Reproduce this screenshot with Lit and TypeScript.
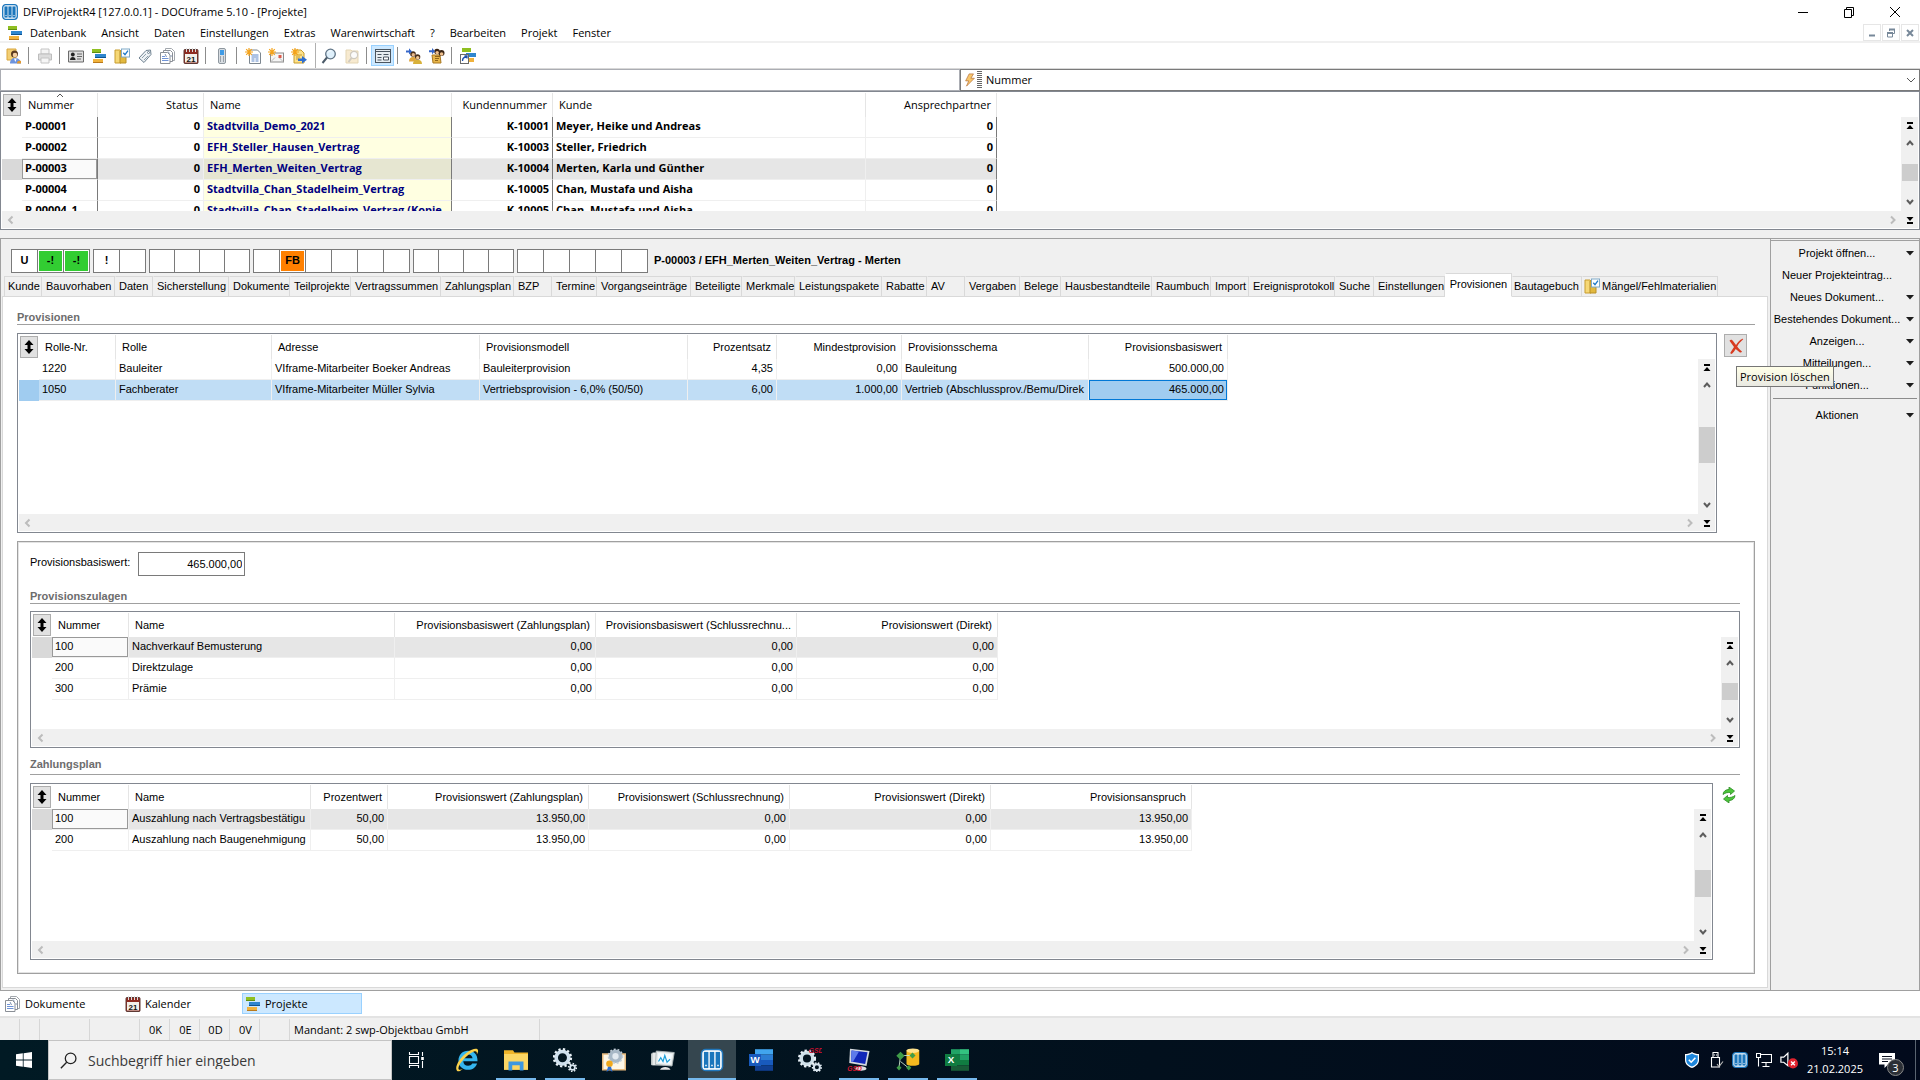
import { LitElement, html, css, svg, nothing, TemplateResult } from "lit";
import { classMap } from "lit/directives/class-map.js";
import { styleMap } from "lit/directives/style-map.js";

/* ---------- icons ---------- */

const pics: Record<string, TemplateResult> = {
  logo: svg`<rect x="0.7" y="0.7" width="14.6" height="14.6" rx="3" fill="#fff" stroke="#1b76bc" stroke-width="1.3"/>
    <rect x="2.4" y="2.4" width="3.2" height="11.2" fill="#1b76bc"/><rect x="6.4" y="2.4" width="3.2" height="11.2" fill="#1b76bc"/><rect x="10.4" y="2.4" width="3.2" height="11.2" fill="#1b76bc"/>
    <path d="M3.5 11.5h1M7.5 11.5h1M11.5 11.5h1" stroke="#fff"/>`,
  projekte: svg`<rect x="1" y="1" width="9" height="4" fill="#8fbf21"/><path d="M1 4.5h9" stroke="#5f8f10"/>
    <rect x="4" y="6" width="11" height="4" fill="#2f86cf"/><path d="M4 9.5h11" stroke="#0e5591"/>
    <rect x="2" y="11" width="10" height="4" fill="#f0b23c"/><path d="M2 14.500h10" stroke="#b9791c"/>`,
  user: svg`<path d="M1 1h9v11H1z" fill="#f3cf74" stroke="#d9a63c"/><circle cx="8.500" cy="6" r="3.500" fill="#5a3a20"/><circle cx="9" cy="7" r="2.300" fill="#f4cfa2"/><path d="M4 15.500c0-3.500 2-5.500 5-5.500s6 2 6 5.500z" fill="#6d93dd"/><path d="M8 10.500l1.300 3.500 1.500-3.500z" fill="#fff"/><path d="M11 15.500c0-2 1-3 4-2.500v2.500z" fill="#e39a2e"/>`,
  printer: svg`<path d="M4 1h8v5H4z" fill="#f4f4f4" stroke="#c4c4c4"/><path d="M1.500 6h13v6h-13z" fill="#dcdcdc" stroke="#bdbdbd"/><path d="M4 10h8v5H4z" fill="#f6f6f6" stroke="#c4c4c4"/>`,
  card: svg`<path d="M.5 3h15v11H.5z" fill="#dedede" stroke="#6b6b6b"/><circle cx="4.800" cy="6.500" r="1.900" fill="#222"/><path d="M2 12c0-4 5.600-4 5.600 0z" fill="#222"/><path d="M9 6h5M9 8.500h5M9 11h4" stroke="#666"/>`,
  folder: svg`<path d="M1 2h5l1 1v12H1z" fill="#f6d876" stroke="#c79c2e"/><path d="M6 3h6v12H6z" fill="#e2b93f" stroke="#b98f28"/><rect x="7.500" y="1" width="8" height="8" fill="#fff" stroke="#7fa9c8"/><path d="M9.300 4.800l1.700 1.900 3-4" fill="none" stroke="#1c78c8" stroke-width="1.300"/>`,
  tag: svg`<path d="M2 10L9 2.500l4.500-.5.500 4.500L7 14.500z" fill="#eef2f5" stroke="#6f8291"/><circle cx="11.500" cy="4.500" r="1" fill="#fff" stroke="#6f8291"/><path d="M5 10l4-4M7 12l4-4" stroke="#90a0ac"/>`,
  docs: svg`<path d="M5.500 .5h6l3 3v9h-9z" fill="#fff" stroke="#a2a7ad"/><path d="M3.500 2.500h7l2 2v9h-9z" fill="#fff" stroke="#8a8f96"/><path d="M.5 4.500h7l2.500 2.500v8.500H.5z" fill="#fff" stroke="#8a8f96"/><path d="M2 8.500h3M2 10.500h6.500M2 12.500h6.500" stroke="#6f93d6"/><path d="M5 6l1.500 3M8 3.500l1.500 2M10.500 8h1.500" stroke="#7d8fb0"/>`,
  calendar: svg`<rect x="1" y="1.500" width="14" height="14" rx="1" fill="#8f2a20" stroke="#5e3a35"/><rect x="2" y="6" width="12" height="8.500" fill="#f3efe9"/><path d="M3.500 0v4M6.500 0v4M9.500 0v4M12.500 0v4" stroke="#ddd"/><text x="8" y="13.500" text-anchor="middle" font-size="8" font-weight="700" font-family="Liberation Sans, sans-serif" fill="#111">21</text>`,
  phone: svg`<rect x="4.500" y="0.500" width="7" height="15" rx="1.500" fill="#d8dde2" stroke="#8e979f"/><rect x="6" y="2" width="4" height="5" fill="#3f9be6"/><path d="M6 9h1M9 9h1M6 11h1M9 11h1M6 13h1M9 13h1" stroke="#5c6770"/>`,
  newdoc: svg`<path d="M4.500 2h8l3 3v10.500h-11z" fill="#fff" stroke="#7d8790"/><path d="M6.500 7h7M6.500 9h7M6.500 11h3M10.500 11h3M6.500 13h3M10.500 13h3" stroke="#5d86c8"/><path d="M4 0v8M0 4h8M1.200 1.200l5.600 5.600M6.800 1.200L1.200 6.800" stroke="#f5a31a" stroke-width="1.200"/>`,
  newmail: svg`<rect x="2.500" y="5" width="13" height="9" fill="#f5f5f5" stroke="#8b8b8b"/><path d="M3 13.500l4-4M11 9.500l4 4" stroke="#bbb"/><rect x="10.500" y="7" width="3" height="3" fill="#dd5a4a"/><path d="M4 0v8M0 4h8M1.200 1.200l5.600 5.600M6.800 1.200L1.200 6.800" stroke="#f5a31a" stroke-width="1.200"/>`,
  newmove: svg`<path d="M3 2h7l3 3v10H3z" fill="#fde18a" stroke="#c79c2e"/><path d="M5 7h6M5 9h4M5 11h3" stroke="#c79c2e"/><path d="M7 10.500h4V8l5 3.800-5 3.800v-2.600H7z" fill="#2f6fd0"/><path d="M4 0v8M0 4h8M1.200 1.200l5.600 5.600M6.800 1.200L1.200 6.800" stroke="#f5a31a" stroke-width="1.200"/>`,
  lens: svg`<circle cx="9.500" cy="6" r="4.800" fill="#dff0fb" stroke="#5f7385" stroke-width="1.300"/><path d="M7 4.500c.8-1.300 2-1.700 3.300-1.500" fill="none" stroke="#fff"/><path d="M6 9.500l-4.500 5.500" stroke="#4b5a68" stroke-width="2"/>`,
  lensoff: svg`<path d="M2 2h5l1 1h6v12H2z" fill="#f7ead0" stroke="#e3d5b4"/><circle cx="10" cy="7" r="3.600" fill="#fbfbfb" stroke="#cfcac0" stroke-width="1.200"/><path d="M7.500 10l-3 4" stroke="#cfcac0" stroke-width="1.800"/>`,
  form: svg`<rect x="0.500" y="1.500" width="15" height="13" fill="#e8eef2" stroke="#4a5560"/><path d="M1 3.500h14" stroke="#4a5560"/><path d="M2.500 6.500h4M2.500 9.500h4M2.500 12h4" stroke="#4a5560"/><path d="M8.500 6.500h5M8.500 9h5v3h-5z" fill="#fff" stroke="#4a5560"/>`,
  people: svg`<circle cx="7" cy="6" r="2.800" fill="#4a2f1c"/><circle cx="7.300" cy="6.800" r="1.700" fill="#e9b98a"/><circle cx="11.500" cy="9" r="2.800" fill="#4a2f1c"/><circle cx="11.700" cy="9.800" r="1.700" fill="#f1c795"/><path d="M3 13.500c0-3 1.500-4.500 4-4.500s3 1 3 4.500z" fill="#e0a63d"/><path d="M7 16c0-3 1.700-4.300 4.500-4.300S16 13 16 16z" fill="#d8b13a"/><path d="M0 2.500h3V.3L6 3.500 3 6.500v-2H0z" fill="#3566c9"/>`,
  team: svg`<path d="M3 7h8l1 8H4z" fill="#e7b54a" stroke="#a97820"/><circle cx="8" cy="3.500" r="2.800" fill="#3b2515"/><circle cx="12.500" cy="5" r="3" fill="#3b2515"/><circle cx="12.600" cy="6" r="1.800" fill="#efc08e"/><circle cx="8.200" cy="4.600" r="1.700" fill="#efc08e"/><path d="M6 8.500h5M6 10.500h4M6 12.500h3" stroke="#8f651b"/><path d="M0 2.200h3V0l3 3.200-3 3V4.200H0z" fill="#3566c9"/>`,
  jump: svg`<rect x="2" y="0" width="9" height="4" fill="#8fbf21"/><rect x="6" y="5" width="10" height="4" fill="#2f86cf"/><rect x="8" y="10" width="6" height="4" fill="#f0b23c"/><rect x="0.500" y="6.500" width="8" height="9" fill="#fff" stroke="#6a6a6a"/><path d="M2.500 13c0-3 1.500-4 4-4M4.500 7.800h2.500v2.700" fill="none" stroke="#1e4fae" stroke-width="1.300"/>`,
  bolt: svg`<path d="M7 1h5L9 6h4L4 15l2.500-6H3z" fill="#f8c66b" stroke="#b5713a" stroke-width=".8"/>`,
  cross: svg`<path d="M1.500 2.800C2.500 1 4 1.500 5 3l3 4c1.800-2.800 3.800-5 6.500-6.200.6 0 .9.300.4.800C12.500 3.800 10.600 6 9.200 8.600c1.200 1.800 2.700 3.400 4.800 5-.5 1.200-1.600 1.300-2.700.5L7.700 11C6.500 13 5.300 14.600 4 15.800c-1.300.4-2-.4-1.500-1.300C3.600 12.700 4.800 10.800 6 9z" fill="#d83a20"/>`,
  refresh: svg`<path d="M2 7.500C2.300 4 5 2.500 8 2.500V0L13.500 4 9.500 7.500V5.500C6.500 5.200 4 6 2 7.500z" fill="#4cc63a" stroke="#2c8a25" stroke-width=".8"/><path d="M14 8.500c-.3 3.500-3 5-6 5V16L2.500 12 6.500 8.500v2c3 .3 5.500-.5 7.500-2z" fill="#4cc63a" stroke="#2c8a25" stroke-width=".8"/>`,
  sort: svg`<path d="M8 1l4.500 5h-3v4h3L8 15l-4.500-5h3V6h-3z" fill="#000"/>`,
  up: svg`<path d="M5 10l3-3.500 3 3.500" fill="none" stroke="#5c5c5c" stroke-width="2"/>`,
  down: svg`<path d="M5 5l3 3.500L11 5" fill="none" stroke="#5c5c5c" stroke-width="2"/>`,
  left: svg`<path d="M9.500 4.500L6 8l3.500 3.500" fill="none" stroke="#bcbcbc" stroke-width="2"/>`,
  right: svg`<path d="M6 4.500L9.500 8 6 11.500" fill="none" stroke="#bcbcbc" stroke-width="2"/>`,
  first: svg`<path d="M5 4h6v2H5zM8 7l3.500 4h-7z" fill="#000"/>`,
  last: svg`<path d="M5 10h6v2H5zM8 9L4.500 5h7z" fill="#000"/>`,
  caret: svg`<path d="M4 6h8l-4 4.500z" fill="#1c1c1c"/>`,
  chevron: svg`<path d="M4 6l4 4 4-4" fill="none" stroke="#555"/>`,
  asc: svg`<path d="M5 10l3-3 3 3" fill="none" stroke="#555"/>`,
  min: svg`<path d="M3 8.500h10" stroke="#000"/>`,
  restore: svg`<path d="M3.500 5.500h7v8h-7zM5.500 5V3.500h7v8H11" fill="none" stroke="#000"/>`,
  close: svg`<path d="M3 3l10 10M13 3L3 13" stroke="#000"/>`,
  mdimin: svg`<path d="M5 10.500h6" stroke="#778899" stroke-width="2"/>`,
  mdirestore: svg`<path d="M4.500 8h5v4h-5zM6.500 6V4.500h5v4H10" fill="none" stroke="#778899"/><path d="M4 8h6M6 4.500h6" stroke="#778899" stroke-width="2"/>`,
  mdiclose: svg`<path d="M5 5l6 6M11 5l-6 6" stroke="#778899" stroke-width="2"/>`,
  windows: svg`<path d="M0 2.300L6.800 1.300V7.600H0zM7.600 1.200L16 0v7.600H7.600zM0 8.400h6.800v6.300L0 13.700zM7.600 8.400H16V16l-8.400-1.200z" fill="#fff"/>`,
  search: svg`<circle cx="10" cy="6" r="5" fill="none" stroke="#222" stroke-width="1.200"/><path d="M6.300 9.700L.8 15.300" stroke="#222" stroke-width="1.300"/>`,
  taskview: svg`<path d="M1.500 4.500h9v7h-9zM1.500 0v2.500h9V0M1.500 16v-2.500h9V16M14.500 0v4M14.500 9v7" fill="none" stroke="#fff" stroke-width="1.100"/><rect x="13.200" y="5" width="2.600" height="3" fill="#fff"/>`,
  ie: svg`<path d="M15 8.800H5.500c.2 2 1.400 3 3.200 3 1.300 0 2.200-.5 2.800-1.500h3.200C13.800 13 11.700 14.500 8.700 14.500 5 14.500 2.300 12 2.300 8.300S5 1.800 8.700 1.800c4 0 6.500 2.600 6.300 7zM5.600 6.900h6.100C11.500 5.200 10.400 4.300 8.700 4.300S5.800 5.200 5.600 6.900z" fill="#35b5ee"/><path d="M1.300 15.200C-.6 13 3 6.500 8 3c3.500-2.500 6.800-3.200 7.300-1.600.3.900-.2 2-.8 3.100.4-2-.4-2.700-2.200-2C8 4.200 2.500 10.500 2.300 13.300c-.1 1.500 1.300 1.400 3 .5-1.700 1.600-3.200 2.200-4 1.400z" fill="#fbd14b"/>`,
  explorer: svg`<path d="M0 1.500h6l1 1.500h9v11.500H0z" fill="#f0b429"/><path d="M0 4h16v10.500H0z" fill="#fcd664"/><path d="M3 9h10v6H10.500v-3.500h-5V15H3z" fill="#3e97df"/>`,
  gears: svg`<circle cx="6.300" cy="6.500" r="4.200" fill="none" stroke="#cfe0ee" stroke-width="2.400"/><circle cx="6.300" cy="6.500" r="5.700" fill="none" stroke="#e9f1f7" stroke-width="1.500" stroke-dasharray="1.500 1.500"/><circle cx="13" cy="13" r="1.600" fill="none" stroke="#d6e4ef" stroke-width="1.200"/><circle cx="13" cy="13" r="2.600" fill="none" stroke="#e9f1f7" stroke-width="1" stroke-dasharray="1 1"/>`,
  cert: svg`<rect x="0.500" y="4" width="15" height="10.500" fill="#fdf6e6" stroke="#e5b87c"/><circle cx="9" cy="5.500" r="3.300" fill="#e3eaf0" stroke="#a8b8c6" stroke-width="2.400"/><circle cx="9" cy="5.500" r="4.700" fill="none" stroke="#c3ced8" stroke-dasharray="1.300 1.300"/><circle cx="5" cy="10.500" r="2.200" fill="#f0a81c"/><path d="M4 12.500l-1 3.500 2-1.500 2 1.500-1-3.500z" fill="#2d6fd2"/>`,
  monitor: svg`<rect x="0" y="3.500" width="9" height="8" rx=".5" fill="#b9c0c0"/><rect x="1" y="3" width="9" height="8.500" fill="#e6e9e9"/><path d="M3.500 2l12 1-1.500 9L3 11z" fill="#e8ecec" stroke="#a9b3b5" stroke-width=".6"/><path d="M4.800 3.300l9.200.8-1.100 6.500-8.400-.8z" fill="#f6fcff"/><path d="M5 9l1.500-2.500L8 9l1.200-4 1.500 4.500 2-2" fill="none" stroke="#1c9fd8" stroke-width=".8"/><path d="M6 14.500c1-2.500 6-2.500 7 0z" fill="#e6e6e6"/>`,
  tasklogo: svg`<rect x="0.500" y="0.500" width="15" height="15" rx="3.200" fill="#2277bb"/><rect x="1.500" y="1.500" width="13" height="13" rx="2.400" fill="#fff"/><rect x="2.600" y="2.600" width="3" height="10.800" fill="#1b76bc"/><rect x="6.500" y="2.600" width="3" height="10.800" fill="#1b76bc"/><rect x="10.400" y="2.600" width="3" height="10.800" fill="#1b76bc"/><path d="M3.500 11.700h1M7.500 11.700h1M11.500 11.700h1" stroke="#fff"/>`,
  word: svg`<rect x="4" y="0.800" width="12" height="3.600" fill="#41a5ee"/><rect x="4" y="4.400" width="12" height="3.600" fill="#2b7cd3"/><rect x="4" y="8" width="12" height="3.600" fill="#185abd"/><rect x="4" y="11.600" width="12" height="3.600" fill="#103f91"/><rect x="0" y="4" width="8" height="8" fill="#185abd"/><text x="4" y="10.200" text-anchor="middle" font-size="6.500" font-weight="700" font-family="Liberation Sans, sans-serif" fill="#fff">W</text>`,
  excel: svg`<rect x="4" y="0.800" width="6" height="3.600" fill="#21a366"/><rect x="10" y="0.800" width="6" height="3.600" fill="#33c481"/><rect x="4" y="4.400" width="6" height="3.600" fill="#107c41"/><rect x="10" y="4.400" width="6" height="3.600" fill="#21a366"/><rect x="4" y="8" width="12" height="3.600" fill="#107c41"/><rect x="4" y="11.600" width="12" height="3.600" fill="#185c37"/><rect x="0" y="4" width="8" height="8" fill="#107c41"/><text x="4" y="10.200" text-anchor="middle" font-size="6.500" font-weight="700" font-family="Liberation Sans, sans-serif" fill="#fff">X</text>`,
  gsdgears: svg`<circle cx="6" cy="7" r="3.900" fill="none" stroke="#cfe0ea" stroke-width="2.400"/><circle cx="6" cy="7" r="5.300" fill="none" stroke="#e9f1f7" stroke-width="1.500" stroke-dasharray="1.500 1.400"/><circle cx="12.600" cy="12.800" r="2" fill="none" stroke="#d6e4ef" stroke-width="1.300"/><circle cx="12.600" cy="12.800" r="2.900" fill="none" stroke="#e9f1f7" stroke-dasharray="1 1"/><text x="12" y="3.600" text-anchor="middle" font-size="4.500" font-style="italic" font-weight="700" font-family="Liberation Sans, sans-serif" fill="#c8102e">GSD</text>`,
  gsdpc: svg`<path d="M2 .5l13 1.500-2 10L1.500 10z" fill="#d5dadf"/><path d="M3 1.700l10.700 1.200-1.600 7.700L2.700 9z" fill="#1127b8"/><path d="M3 1.700l5 .6-4 6.900-1.300-.2z" fill="#5e7bea"/><path d="M5 14c1-2.500 8-2.500 8 0-1 1.500-6 1.500-8 0z" fill="#dfdfdf"/><text x="5" y="15.600" text-anchor="middle" font-size="4.500" font-style="italic" font-weight="700" font-family="Liberation Sans, sans-serif" fill="#d8142f">GSD</text>`,
  database: svg`<path d="M7 1.500v9c0 1.800 8.500 1.800 8.500 0v-9z" fill="#f3b81f"/><ellipse cx="11.250" cy="1.800" rx="4.250" ry="1.500" fill="#ffe28a"/><path d="M3 5l8 0M3 5l-1 8M3 9l5 4" stroke="#c9e2c9" stroke-width=".6"/><path d="M3 2.500l2.800 2.700L3 8 .2 5.200zM11 3l2 2-2 2-2-2zM2 11.500l1.700 1.700L2 15 .3 13.200zM8.500 11.500l1.700 1.700L8.500 15l-1.700-1.800z" fill="#3f9c48"/>`,
  shield: svg`<path d="M8 0c2 1.500 4.500 2 7 2v6c0 4-3 6.500-7 8-4-1.500-7-4-7-8V2c2.500 0 5-.5 7-2z" fill="#fff"/><path d="M8 1.400c1.800 1.200 3.700 1.700 5.800 1.800V8c0 3.300-2.400 5.300-5.800 6.600C4.600 13.300 2.200 11.300 2.200 8V3.200C4.300 3.100 6.200 2.600 8 1.400z" fill="#1d86dc"/><path d="M4.800 7.800l2.400 2.400 4.200-4.400" fill="none" stroke="#fff" stroke-width="1.600"/>`,
  usb: svg`<path d="M3.500 5.500h8v9.500h-8zM5 5.500v-5h5v5M6.500 2.500v1M8.500 2.500v1" fill="none" stroke="#fff" stroke-width="1.100"/><path d="M9 12l2 2.500 4-5" fill="none" stroke="#b5b5b5" stroke-width="1.200"/>`,
  net: svg`<path d="M4.500 2.500h11v8h-10M10 10.500v3.500M6.500 14.500h7M.5 1.500h4v4h-4zM2.500 5.500v9" fill="none" stroke="#fff" stroke-width="1.100"/>`,
  mute: svg`<path d="M.8 5.500h2.500L7 2v11L3.300 10H.8z" fill="none" stroke="#fff" stroke-width="1.100"/><circle cx="11.500" cy="11" r="4.500" fill="#e0232e"/><path d="M9.800 9.300l3.400 3.400M13.200 9.300l-3.400 3.400" stroke="#fff" stroke-width="1.200"/>`,
  note: svg`<path d="M0 1h16v11.500h-7L5.500 16v-3.500H0z" fill="#fff"/><path d="M3 4.500h10M3 7h10M3 9.500h6" stroke="#0a1020" stroke-width="1.100"/>`,
};

const icon = (name: string, size = 16) =>
  html`<svg width=${size} height=${size} viewBox="0 0 16 16" aria-hidden="true">${pics[name]}</svg>`;

/* ---------- list control ---------- */

interface Column {
  label: string;
  width: number;
  right?: boolean;
  rule?: boolean;
  tint?: boolean;
  sorted?: boolean;
}

class DfGrid extends LitElement {
  static properties = {
    columns: { attribute: false },
    rows: { attribute: false },
    selected: { type: Number },
    focusColumn: { type: Number },
    caption: {},
  };
  declare columns: Column[];
  declare rows: string[][];
  declare selected: number;
  declare focusColumn: number;
  declare caption: string;

  static styles = css`
    :host {
      display: flex;
      flex-direction: column;
      box-sizing: border-box;
      min-width: 0;
      border: 1px solid #828790;
      padding: 1px;
      background: #fff;
      font: 11px/18px "Liberation Sans", Arial, sans-serif;
      color: #000;
    }
    :host(.master) {
      font: 11px/18px "Open Sans", "Noto Sans", sans-serif;
    }
    :host(.master) td {
      font-weight: 700;
    }
    svg {
      display: block;
      flex: none;
    }
    button {
      display: flex;
      align-items: center;
      justify-content: center;
      border: 0;
      margin: 0;
      padding: 0;
      background: none;
    }
    .top {
      display: flex;
      flex: 1;
      min-height: 0;
    }
    .view {
      flex: 1 1 0;
      min-width: 0;
      overflow: hidden;
      contain: size;
    }
    table {
      table-layout: fixed;
      border-collapse: separate;
      border-spacing: 0;
    }
    th,
    td {
      box-sizing: border-box;
      padding: 0 3px;
      overflow: hidden;
      white-space: nowrap;
      text-align: left;
      font-weight: 400;
    }
    th {
      position: relative;
      height: 24px;
      padding: 0 5px 0 6px;
      border-right: 1px solid #e5e5e5;
    }
    td {
      height: 21px;
      padding-bottom: 2px;
      border-right: 1px solid #efefef;
      border-bottom: 1px solid #efefef;
    }
    .right {
      text-align: right;
    }
    .gutter,
    td.gutter {
      border: 0;
      padding: 0 1px;
    }
    .sorter {
      width: 18px;
      height: 22px;
      border: 1px solid #adadad;
      background: #e1e1e1;
    }
    .asc {
      position: absolute;
      left: 30px;
      top: -6px;
    }
    td.rule {
      border-right-color: #7a7a7a;
    }
    td.tint {
      background: #ffffe1;
      color: #000080;
    }
    .selected td {
      background: #e6e6e6;
    }
    .selected td.tint {
      background: #e6e6d1;
    }
    .selected td.gutter {
      background: #d9d9d9;
    }
    .selected td.focus {
      background: #fafafa;
      box-shadow: inset 0 0 0 1px #999;
    }
    :host(.active) .selected td {
      background: #c0ddf5;
    }
    :host(.active) .selected td.gutter {
      background: #a0ccf0;
    }
    :host(.active) .selected td.focus {
      background: #a0ccf0;
      box-shadow: inset 0 0 0 1px #0078d7;
    }
    .vbar {
      display: flex;
      flex-direction: column;
      width: 17px;
      margin-top: 24px;
      background: #f0f0f0;
    }
    .vbar button {
      height: 17px;
    }
    .track {
      display: flex;
      flex: 1;
      align-items: center;
      padding-left: 1px;
    }
    .thumb {
      width: 100%;
      height: 34%;
      min-height: 17px;
      background: #cdcdcd;
    }
    .hbar {
      display: flex;
      align-items: center;
      justify-content: space-between;
      height: 17px;
      background: #f0f0f0;
    }
    .hbar button {
      width: 17px;
    }
    .ends {
      display: flex;
    }
  `;

  render() {
    const total = this.columns.reduce((sum, c) => sum + c.width, 20);
    return html`
      <div class="top">
        <div class="view">
          <table style=${styleMap({ width: `${total}px` })} aria-label=${this.caption}>
            <colgroup>
              <col style="width:20px" />
              ${this.columns.map((c) => html`<col style=${styleMap({ width: `${c.width}px` })} />`)}
            </colgroup>
            <thead>
              <tr>
                <th class="gutter"><button class="sorter" aria-label="Sortierung">${icon("sort", 16)}</button></th>
                ${this.columns.map(
                  (c) => html`<th class=${classMap({ right: !!c.right })} scope="col">
                    ${c.sorted ? html`<span class="asc">${icon("asc")}</span>` : nothing}${c.label}
                  </th>`
                )}
              </tr>
            </thead>
            <tbody>
              ${this.rows.map(
                (r, i) => html`<tr class=${classMap({ selected: i === this.selected })}>
                  <td class="gutter"></td>
                  ${r.map((v, j) => {
                    const c = this.columns[j];
                    return html`<td
                      class=${classMap({
                        right: !!c.right,
                        rule: !!c.rule,
                        tint: !!c.tint,
                        focus: j === this.focusColumn,
                      })}
                    >${v}</td>`;
                  })}
                </tr>`
              )}
            </tbody>
          </table>
        </div>
        <div class="vbar">
          <button aria-label="Anfang">${icon("first")}</button>
          <button aria-label="Nach oben">${icon("up")}</button>
          <div class="track"><div class="thumb"></div></div>
          <button aria-label="Nach unten">${icon("down")}</button>
        </div>
      </div>
      <div class="hbar">
        <button aria-label="Nach links">${icon("left")}</button>
        <div class="ends">
          <button aria-label="Nach rechts">${icon("right")}</button>
          <button aria-label="Ende">${icon("last")}</button>
        </div>
      </div>
    `;
  }
}
customElements.define("df-grid", DfGrid);

/* ---------- data ---------- */

const projectColumns: Column[] = [
  { label: "Nummer", width: 76, rule: true, sorted: true },
  { label: "Status", width: 106, right: true },
  { label: "Name", width: 248, rule: true, tint: true },
  { label: "Kundennummer", width: 101, right: true, rule: true },
  { label: "Kunde", width: 313 },
  { label: "Ansprechpartner", width: 131, right: true, rule: true },
];
const projects = [
  ["P-00001", "0", "Stadtvilla_Demo_2021", "K-10001", "Meyer, Heike und Andreas", "0"],
  ["P-00002", "0", "EFH_Steller_Hausen_Vertrag", "K-10003", "Steller, Friedrich", "0"],
  ["P-00003", "0", "EFH_Merten_Weiten_Vertrag", "K-10004", "Merten, Karla und Günther", "0"],
  ["P-00004", "0", "Stadtvilla_Chan_Stadelheim_Vertrag", "K-10005", "Chan, Mustafa und Aisha", "0"],
  ["P-00004_1", "0", "Stadtvilla_Chan_Stadelheim_Vertrag (Kopie", "K-10005", "Chan, Mustafa und Aisha", "0"],
];
const commissionColumns: Column[] = [
  { label: "Rolle-Nr.", width: 77 },
  { label: "Rolle", width: 156 },
  { label: "Adresse", width: 208 },
  { label: "Provisionsmodell", width: 208 },
  { label: "Prozentsatz", width: 89, right: true },
  { label: "Mindestprovision", width: 125, right: true },
  { label: "Provisionsschema", width: 187 },
  { label: "Provisionsbasiswert", width: 139, right: true },
];
const commissions = [
  ["1220", "Bauleiter", "VIframe-Mitarbeiter Boeker Andreas", "Bauleiterprovision", "4,35", "0,00", "Bauleitung", "500.000,00"],
  ["1050", "Fachberater", "VIframe-Mitarbeiter Müller Sylvia", "Vertriebsprovision - 6,0% (50/50)", "6,00", "1.000,00", "Vertrieb (Abschlussprov./Bemu/Direk", "465.000,00"],
];
const bonusColumns: Column[] = [
  { label: "Nummer", width: 77 },
  { label: "Name", width: 266 },
  { label: "Provisionsbasiswert (Zahlungsplan)", width: 201, right: true },
  { label: "Provisionsbasiswert (Schlussrechnu...", width: 201, right: true },
  { label: "Provisionswert (Direkt)", width: 201, right: true },
];
const bonuses = [
  ["100", "Nachverkauf Bemusterung", "0,00", "0,00", "0,00"],
  ["200", "Direktzulage", "0,00", "0,00", "0,00"],
  ["300", "Prämie", "0,00", "0,00", "0,00"],
];
const planColumns: Column[] = [
  { label: "Nummer", width: 77 },
  { label: "Name", width: 182 },
  { label: "Prozentwert", width: 77, right: true },
  { label: "Provisionswert (Zahlungsplan)", width: 201, right: true },
  { label: "Provisionswert (Schlussrechnung)", width: 201, right: true },
  { label: "Provisionswert (Direkt)", width: 201, right: true },
  { label: "Provisionsanspruch", width: 201, right: true },
];
const plan = [
  ["100", "Auszahlung nach Vertragsbestätigu", "50,00", "13.950,00", "0,00", "0,00", "13.950,00"],
  ["200", "Auszahlung nach Baugenehmigung", "50,00", "13.950,00", "0,00", "0,00", "13.950,00"],
];

const menus = ["Datenbank", "Ansicht", "Daten", "Einstellungen", "Extras", "Warenwirtschaft", "?", "Bearbeiten", "Projekt", "Fenster"];
const tools: [string, string][] = [
  ["user", "Anmelden"], ["|", ""], ["printer", "Drucken"], ["|", ""],
  ["card", "Adressen"], ["projekte", "Projekte"], ["folder", "Vorgänge"], ["tag", "Artikel"], ["docs", "Dokumente"], ["calendar", "Kalender"],
  ["|", ""], ["phone", "Telefon"], ["|", ""],
  ["newdoc", "Neues Dokument"], ["newmail", "Neue Nachricht"], ["newmove", "Weiterleiten"],
  ["||", ""], ["lens", "Suchen"], ["lensoff", "Suche in Liste"], ["|", ""],
  ["form", "Formular"], ["|", ""], ["people", "Kontakte"], ["team", "Beteiligte"], ["|", ""], ["jump", "Verknüpfung"],
];
const flagGroups: string[][] = [
  ["U", "-!", "-!"], ["!", ""], ["", "", "", ""], ["", "FB", "", "", "", ""], ["", "", "", ""], ["", "", "", "", ""],
];
const tabs = [
  "Kunde", "Bauvorhaben", "Daten", "Sicherstellung", "Dokumente", "Teilprojekte", "Vertragssummen", "Zahlungsplan", "BZP",
  "Termine", "Vorgangseinträge", "Beteiligte", "Merkmale", "Leistungspakete", "Rabatte", "AV", "Vergaben", "Belege",
  "Hausbestandteile", "Raumbuch", "Import", "Ereignisprotokoll", "Suche", "Einstellungen", "Provisionen", "Bautagebuch",
  "Mängel/Fehlmaterialien",
];
const actions: [string, boolean][] = [
  ["Projekt öffnen...", true], ["Neuer Projekteintrag...", false], ["Neues Dokument...", true],
  ["Bestehendes Dokument...", true], ["Anzeigen...", true], ["Mitteilungen...", true], ["Funktionen...", true],
];
const apps: [string, string, string][] = [
  ["ie", "Internet Explorer", ""], ["explorer", "Explorer", "open"], ["gears", "Dienste", "open"], ["cert", "Zertifikate", ""],
  ["monitor", "Leistung", ""], ["tasklogo", "DOCUframe", "current"], ["word", "Word", ""], ["gsdgears", "GSD Dienste", ""],
  ["gsdpc", "GSD Client", "open"], ["database", "Datenbank", "open"], ["excel", "Excel", "open"],
];

/* ---------- application ---------- */

class AppRoot extends LitElement {
  static styles = css`
    :host {
      --ui: "Open Sans", "Noto Sans", sans-serif;
      --form: "Liberation Sans", Arial, sans-serif;
      display: flex;
      flex-direction: column;
      min-height: 100vh;
      background: #f0f0f0;
      color: #000;
      font: 11px/16px var(--ui);
    }
    * {
      box-sizing: border-box;
    }
    svg {
      display: block;
      flex: none;
    }
    button,
    input,
    select {
      font: inherit;
      color: inherit;
      margin: 0;
      padding: 0;
      border: 0;
      border-radius: 0;
      background: none;
      outline: 0;
      appearance: none;
    }
    button {
      display: flex;
      align-items: center;
      justify-content: center;
      white-space: nowrap;
    }
    .titlebar,
    .menubar,
    .toolbar {
      display: flex;
      align-items: center;
      background: #fff;
    }
    .titlebar {
      height: 24px;
      padding-left: 2px;
      gap: 5px;
    }
    .titlebar h1 {
      flex: 1;
      margin: 0;
      font: inherit;
    }
    .wincontrols {
      display: flex;
      padding-right: 2px;
    }
    .wincontrols button {
      width: 46px;
      height: 20px;
    }
    .menubar {
      height: 19px;
      border-bottom: 2px solid #f0f0f0;
      padding-left: 7px;
    }
    .menubar nav {
      display: flex;
      flex: 1;
      gap: 15px;
      padding-left: 7px;
    }
    .mdi {
      display: flex;
      gap: 1px;
      padding-right: 1px;
    }
    .mdi button {
      width: 18px;
      height: 17px;
      border: 1px solid #e6e6e6;
    }
    .toolbar {
      height: 26px;
      padding-left: 2px;
      border-bottom: 1px solid #d8d8d8;
    }
    .tool {
      width: 23px;
      height: 21px;
    }
    .tool.on {
      background: #cce8ff;
      border: 1px solid #99d1ff;
    }
    .sep {
      width: 1px;
      height: 17px;
      margin: 0 4px 0 3px;
      background: #8c8c8c;
    }
    .sep.full {
      height: 25px;
      margin: 0 1px 0 5px;
      background: #b0b0b0;
    }
    .searchrow {
      display: grid;
      grid-template-columns: 1fr 1fr;
      height: 22px;
    }
    .searchrow input {
      min-width: 0;
      background: #fff;
      border: 1px solid #abadb3;
    }
    .combo {
      display: flex;
      align-items: center;
      border: 1px solid #7a7a7a;
      background: #fff;
      padding: 0 0 0 2px;
    }
    .combo select {
      flex: 1;
      padding-left: 4px;
      height: 18px;
      line-height: 16px;
    }
    .stripes {
      width: 5px;
      height: 18px;
      background: repeating-linear-gradient(#666 0 1px, #fff 1px 2px);
    }
    .master {
      height: 139px;
    }
    .workspace {
      display: flex;
      flex: 1;
      margin-top: 8px;
      border: 1px solid #a0a0a0;
      font: 11px/16px var(--form);
    }
    .record {
      display: flex;
      flex-direction: column;
      flex: 1;
      min-width: 0;
      padding: 10px 2px 2px 1px;
      border-right: 1px solid #a0a0a0;
    }
    .flags {
      display: flex;
      align-items: center;
      gap: 3px;
      padding-left: 9px;
    }
    .flaggroup {
      display: flex;
      padding-right: 1px;
    }
    .flag {
      width: 27px;
      height: 24px;
      margin-right: -1px;
      padding-bottom: 2px;
      border: 1px solid #7a7a7a;
      background: #fff;
      font-weight: 700;
    }
    .flaggroup.four .flag {
      width: 26px;
    }
    .flag.green {
      background: #32cd32;
      box-shadow: inset 0 0 0 1px #fff;
    }
    .flag.orange {
      background: #ff8000;
      box-shadow: inset 0 0 0 1px #fff;
    }
    .flags h2 {
      margin: 0 0 0 3px;
      padding-bottom: 2px;
      font: inherit;
      font-weight: 700;
    }
    .tabs {
      display: grid;
      grid-template-columns: 38px 73px 38px 76px 61px 61px 90px 73px 38px 45px 94px 51px 53px 87px 45px 38px 55px 41px 91px 59px 38px 86px 39px 71px 67px 70px 136px;
      align-items: end;
      height: 24px;
      padding-left: 2px;
      margin-bottom: -1px;
    }
    .tab {
      height: 21px;
      border: 1px solid #d9d9d9;
      border-left-color: transparent;
      justify-content: flex-start;
      padding: 0 0 2px 3px;
      gap: 2px;
    }
    .tab:first-child {
      border-left-color: #d9d9d9;
    }
    .tab:last-child,
    .tab.current + .tab {
      padding-left: 1px;
    }
    .tab.current {
      height: 24px;
      background: #fff;
      border-bottom-color: #fff;
      justify-content: center;
      padding: 0 0 2px;
      position: relative;
    }
    .page {
      display: flex;
      flex: 1;
      flex-direction: column;
      padding: 13px 12px 13px 14px;
      border: 1px solid #d9d9d9;
      background: #fff;
    }
    .section {
      margin: 0 0 8px;
      border-bottom: 1px solid #a0a0a0;
      font: 700 11px/14px var(--form);
      color: #6d6d6d;
    }
    .line {
      display: flex;
    }
    .line df-grid {
      flex: 1;
    }
    .commissions {
      gap: 7px;
      height: 200px;
      margin-bottom: 8px;
    }
    .side {
      position: relative;
      width: 31px;
      padding-top: 1px;
    }
    .delete {
      width: 23px;
      height: 23px;
      border: 1px solid #adadad;
      background: #e1e1e1;
    }
    .tooltip {
      position: absolute;
      z-index: 2;
      left: 12px;
      top: 33px;
      padding: 0 3px;
      border: 1px solid #767676;
      background: linear-gradient(#ffffe8, #e9e9e2);
      font: 11px/19px var(--ui);
      white-space: nowrap;
    }
    .detail {
      display: flex;
      flex: 1;
      flex-direction: column;
      padding: 9px 14px 11px 11px;
      border: 1px solid #a0a0a0;
      box-shadow: inset 0 0 0 1px #e3e3e3;
    }
    .field {
      display: flex;
      gap: 8px;
      margin: 1px 0 13px 1px;
    }
    .field label {
      line-height: 21px;
    }
    .field input {
      width: 107px;
      height: 24px;
      padding: 0 2px 1px;
      border: 1px solid #7a7a7a;
      text-align: right;
    }
    .detail .section,
    .detail > df-grid,
    .plan {
      margin-left: 1px;
    }
    .bonus {
      height: 137px;
      margin-bottom: 9px;
    }
    .section.tight {
      margin-bottom: 7px;
    }
    .section.loose {
      padding-bottom: 3px;
    }
    .plan {
      flex: 1;
      gap: 6px;
      margin-bottom: 2px;
    }
    .reload {
      width: 21px;
      height: 24px;
      padding-right: 2px;
    }
    .actions {
      width: 148px;
      padding-top: 1px;
      border-top: 1px solid #a0a0a0;
      margin-top: 1px;
    }
    .action {
      width: 100%;
      height: 22px;
      padding-left: 2px;
    }
    .action span {
      flex: 1;
      text-align: center;
    }
    .action i {
      display: flex;
      justify-content: center;
      width: 18px;
    }
    .actions hr {
      height: 1px;
      margin: 2px 2px 5px;
      border: 0;
      background: #8c8c8c;
    }
    .docbar {
      display: flex;
      align-items: center;
      height: 27px;
      background: #fff;
      border-bottom: 2px solid #e3e3e3;
      padding-left: 2px;
    }
    .doc {
      width: 120px;
      height: 21px;
      border: 1px solid transparent;
      justify-content: flex-start;
      gap: 4px;
      padding-left: 2px;
    }
    .doc.on {
      background: #cce8ff;
      border-color: #99d1ff;
    }
    .status {
      display: grid;
      grid-template-columns: 20px 20px 50px 50px 30px 30px 30px 30px 30px 250px 1fr;
      height: 22px;
      padding-top: 1px;
      line-height: 22px;
    }
    .status span {
      border-right: 1px solid #d7d7d7;
      padding-left: 2px;
      text-align: center;
    }
    .status .client {
      text-align: left;
      padding-left: 4px;
    }
    .taskbar {
      display: flex;
      height: 40px;
      background: linear-gradient(90deg, #011a24, #02101d 60%, #020a1c);
      color: #fff;
    }
    .start {
      width: 48px;
    }
    .find {
      display: flex;
      align-items: center;
      gap: 11px;
      width: 344px;
      padding-left: 11px;
      background: #f2f2f2;
      border: 1px solid #c4c4c4;
    }
    .find input {
      flex: 1;
      min-width: 0;
      padding-top: 2px;
      font-size: 14px;
      color: #222;
    }
    .find input::placeholder {
      color: #3a3a3a;
      opacity: 1;
    }
    .taskview {
      width: 48px;
      margin-right: 3px;
    }
    .apps {
      display: flex;
      flex: 1;
      gap: 1px;
    }
    .app {
      width: 48px;
      border-bottom: 2px solid transparent;
      padding-top: 2px;
    }
    .app.open {
      background: linear-gradient(#76b9ed, #76b9ed) bottom / 40px 2px no-repeat border-box;
    }
    .app.current {
      background: #35464f;
      border-color: #76b9ed;
    }
    .tray {
      display: flex;
      align-items: center;
      gap: 8px;
    }
    .clock {
      margin-left: 1px;
      text-align: center;
      line-height: 18px;
    }
    .notes {
      position: relative;
      width: 45px;
      height: 40px;
      border-right: 1px solid #5a6470;
      padding-right: 12px;
      margin-right: 4px;
    }
    .badge {
      position: absolute;
      right: 11px;
      bottom: 4px;
      width: 17px;
      height: 17px;
      border: 1px solid #888;
      border-radius: 50%;
      background: #2b2f36;
      line-height: 15px;
    }
  `;

  render() {
    return html`
      <header class="titlebar">
        ${icon("logo")}
        <h1>DFViProjektR4 [127.0.0.1] - DOCUframe 5.10 - [Projekte]</h1>
        <div class="wincontrols">
          <button aria-label="Minimieren">${icon("min")}</button>
          <button aria-label="Verkleinern">${icon("restore")}</button>
          <button aria-label="Schließen">${icon("close")}</button>
        </div>
      </header>
      <div class="menubar">
        ${icon("projekte")}
        <nav>${menus.map((m) => html`<button>${m}</button>`)}</nav>
        <div class="mdi">
          <button aria-label="Fenster minimieren">${icon("mdimin")}</button>
          <button aria-label="Fenster verkleinern">${icon("mdirestore")}</button>
          <button aria-label="Fenster schließen">${icon("mdiclose")}</button>
        </div>
      </div>
      <div class="toolbar">
        ${tools.map(([name, label]) =>
          name[0] === "|"
            ? html`<span class=${classMap({ sep: true, full: name === "||" })}></span>`
            : html`<button class=${classMap({ tool: true, on: name === "form" })} aria-label=${label}>${icon(name)}</button>`
        )}
      </div>
      <div class="searchrow">
        <input aria-label="Suchtext" />
        <div class="combo">
          ${icon("bolt", 14)}<span class="stripes"></span>
          <select aria-label="Suchfeld"><option>Nummer</option></select>
          ${icon("chevron")}
        </div>
      </div>
      <df-grid class="master" caption="Projekte" .columns=${projectColumns} .rows=${projects} .selected=${2} .focusColumn=${0}></df-grid>

      <main class="workspace">
        <section class="record">
          <div class="flags">
            ${flagGroups.map(
              (g) => html`<div class=${classMap({ flaggroup: true, four: g.length === 4 })}>
                ${g.map((f) => html`<button class=${classMap({ flag: true, green: f === "-!", orange: f === "FB" })}>${f}</button>`)}
              </div>`
            )}
            <h2>P-00003 / EFH_Merten_Weiten_Vertrag - Merten</h2>
          </div>
          <div class="tabs" role="tablist">
            ${tabs.map(
              (t) => html`<button role="tab" class=${classMap({ tab: true, current: t === "Provisionen" })}>
                ${t.startsWith("Mängel") ? icon("folder") : nothing}${t}
              </button>`
            )}
          </div>
          <div class="page">
            <h3 class="section">Provisionen</h3>
            <div class="line commissions">
              <df-grid class="active" caption="Provisionen" .columns=${commissionColumns} .rows=${commissions} .selected=${1} .focusColumn=${7}></df-grid>
              <div class="side">
                <button class="delete" aria-label="Provision löschen">${icon("cross")}</button>
                <div class="tooltip" role="tooltip">Provision löschen</div>
              </div>
            </div>
            <div class="detail">
              <div class="field">
                <label for="base">Provisionsbasiswert:</label>
                <input id="base" value="465.000,00" />
              </div>
              <h3 class="section tight">Provisionszulagen</h3>
              <df-grid class="bonus" caption="Provisionszulagen" .columns=${bonusColumns} .rows=${bonuses} .selected=${0} .focusColumn=${0}></df-grid>
              <h3 class="section loose">Zahlungsplan</h3>
              <div class="line plan">
                <df-grid caption="Zahlungsplan" .columns=${planColumns} .rows=${plan} .selected=${0} .focusColumn=${0}></df-grid>
                <button class="reload" aria-label="Aktualisieren">${icon("refresh")}</button>
              </div>
            </div>
          </div>
        </section>
        <aside class="actions">
          ${actions.map(([label, more]) => html`<button class="action"><span>${label}</span><i>${more ? icon("caret") : nothing}</i></button>`)}
          <hr />
          <button class="action"><span>Aktionen</span><i>${icon("caret")}</i></button>
        </aside>
      </main>

      <nav class="docbar">
        <button class="doc">${icon("docs")}Dokumente</button>
        <button class="doc">${icon("calendar")}Kalender</button>
        <button class="doc on">${icon("projekte")}Projekte</button>
      </nav>
      <div class="status">
        <span></span><span></span><span></span><span></span>
        <span>0K</span><span>0E</span><span>0D</span><span>0V</span><span></span>
        <span class="client">Mandant: 2 swp-Objektbau GmbH</span>
      </div>

      <footer class="taskbar">
        <button class="start" aria-label="Start">${icon("windows")}</button>
        <label class="find">${icon("search", 17)}<input aria-label="Suche" placeholder="Suchbegriff hier eingeben" /></label>
        <button class="taskview" aria-label="Aktive Anwendungen">${icon("taskview")}</button>
        <div class="apps">
          ${apps.map(([name, label, state]) => html`<button class="app ${state}" aria-label=${label}>${icon(name, 24)}</button>`)}
        </div>
        <div class="tray">
          ${icon("shield")}${icon("usb")}${icon("logo")}${icon("net")}${icon("mute", 18)}
          <div class="clock">15:14<br />21.02.2025</div>
          <button class="notes" aria-label="Benachrichtigungen">${icon("note")}<span class="badge">3</span></button>
        </div>
      </footer>
    `;
  }
}
customElements.define("app-root", AppRoot);
